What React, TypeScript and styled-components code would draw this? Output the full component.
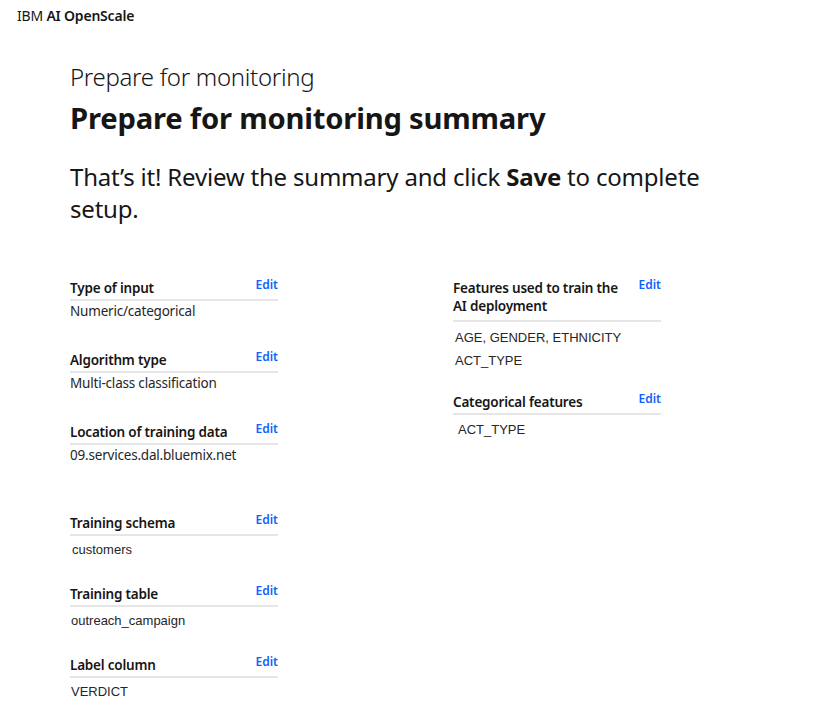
import React from "react";
import styled, { createGlobalStyle } from "styled-components";

const Global = createGlobalStyle`
  html, body { margin: 0; padding: 0; background: #ffffff; }
  body { font-family: "Noto Sans", "Liberation Sans", sans-serif; color: #161616; }
`;

const TopBar = styled.header`
  height: 30px;
  display: flex;
  align-items: center;
  padding-left: 17px;
  font-size: 14px;
  color: #161616;
  letter-spacing: -0.2px;
  b { font-weight: 600; }
`;

const Main = styled.main`
  padding: 32px 0 0 70px;
`;

const Eyebrow = styled.div`
  font-size: 24px;
  font-weight: 300;
  line-height: 30px;
  letter-spacing: -0.3px;
`;

const Title = styled.h1`
  margin: 6px 0 0;
  font-size: 29.2px;
  font-weight: 700;
  line-height: 40px;
  letter-spacing: -0.2px;
`;

const Intro = styled.p`
  margin: 23px 0 0;
  width: 660px;
  font-size: 24px;
  line-height: 32px;
  font-weight: 400;
  letter-spacing: -0.2px;
  b { font-weight: 700; }
`;

const Columns = styled.div`
  display: flex;
  gap: 175px;
  margin-top: 54px;
`;

const Column = styled.div`
  width: 208px;
  display: flex;
  flex-direction: column;
`;

const Section = styled.section<{ $gap?: number }>`
  margin-bottom: ${(p) => p.$gap ?? 31}px;
`;

const LabelRow = styled.div<{ $pad?: number }>`
  display: flex;
  justify-content: space-between;
  align-items: flex-start;
  padding-bottom: ${(p) => p.$pad ?? 2}px;
  border-bottom: 2px solid #e6e6e6;
`;

const Label = styled.h4`
  margin: 0;
  padding-right: 16px;
  font-size: 13.5px;
  font-weight: 600;
  line-height: 18px;
  letter-spacing: -0.2px;
  color: #161616;
`;

const EditLink = styled.a`
  flex: none;
  font-size: 12px;
  font-weight: 600;
  line-height: 12px;
  color: #0f62fe;
  text-decoration: none;
  cursor: pointer;
`;

const ValueList = styled.div<{ $mt?: number; $indent?: number }>`
  padding-top: ${(p) => p.$mt ?? 1}px;
  padding-left: ${(p) => p.$indent ?? 0}px;
`;

const Value = styled.div<{ $arial?: boolean; $lh?: number }>`
  font-family: ${(p) => (p.$arial ? '"Liberation Sans", Arial, sans-serif' : '"Noto Sans", sans-serif')};
  font-size: ${(p) => (p.$arial ? 13 : 13.5)}px;
  line-height: ${(p) => p.$lh ?? 18}px;
  color: #262626;
  letter-spacing: ${(p) => (p.$arial ? 0 : -0.2)}px;
`;

type Item = {
  label: string;
  values: string[];
  arial?: boolean;
  gap?: number;
  mt?: number;
  lh?: number;
  indent?: number;
  pad?: number;
};

const left: Item[] = [
  { label: "Type of input", values: ["Numeric/categorical"] },
  { label: "Algorithm type", values: ["Multi-class classification"] },
  { label: "Location of training data", values: ["09.services.dal.bluemix.net"], gap: 50 },
  { label: "Training schema", values: ["customers"], arial: true, mt: 5, indent: 2, gap: 26 },
  { label: "Training table", values: ["outreach_campaign"], arial: true, mt: 5, indent: 1, gap: 26 },
  { label: "Label column", values: ["VERDICT"], arial: true, mt: 5, indent: 1, gap: 0 },
];

const right: Item[] = [
  {
    label: "Features used to train the AI deployment",
    values: ["AGE, GENDER, ETHNICITY", "ACT_TYPE"],
    arial: true,
    mt: 4,
    lh: 23,
    indent: 2,
    pad: 5,
    gap: 21,
  },
  { label: "Categorical features", values: ["ACT_TYPE"], arial: true, mt: 6, indent: 5, gap: 0 },
];

const Summary: React.FC<{ item: Item }> = ({ item }) => (
  <Section $gap={item.gap}>
    <LabelRow $pad={item.pad}>
      <Label>{item.label}</Label>
      <EditLink>Edit</EditLink>
    </LabelRow>
    <ValueList $mt={item.mt} $indent={item.indent}>
      {item.values.map((v) => (
        <Value key={v} $arial={item.arial} $lh={item.lh}>
          {v}
        </Value>
      ))}
    </ValueList>
  </Section>
);

export default function App() {
  return (
    <>
      <Global />
      <TopBar>
        IBM&nbsp;<b>AI OpenScale</b>
      </TopBar>
      <Main>
        <Eyebrow>Prepare for monitoring</Eyebrow>
        <Title>Prepare for monitoring summary</Title>
        <Intro>
          That’s it! Review the summary and click <b>Save</b> to complete
          <br />
          setup.
        </Intro>
        <Columns>
          <Column>
            {left.map((it) => (
              <Summary key={it.label} item={it} />
            ))}
          </Column>
          <Column>
            {right.map((it) => (
              <Summary key={it.label} item={it} />
            ))}
          </Column>
        </Columns>
      </Main>
    </>
  );
}
